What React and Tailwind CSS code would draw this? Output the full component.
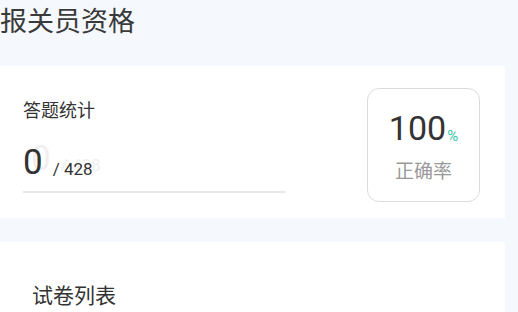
import React from "react";

export default function App() {
  const font = { fontFamily: '"Noto Sans CJK SC", Roboto, "Noto Sans", sans-serif' };
  const num = { fontFamily: "Roboto, sans-serif" };
  return (
    <div className="w-[518px] h-[312px] overflow-hidden bg-[#f5f8fd] text-[#333]" style={font}>
      <div className="h-[66px] pt-[2px]">
        <div className="text-[27px] leading-[36px] text-[#3a3a3a]">报关员资格</div>
      </div>
      <div className="w-[505px] h-[152px] bg-white flex items-center justify-between pl-[23px] pr-[25px]">
        <div className="flex flex-col w-[263px] pt-[6px]">
          <div className="text-[18px] leading-[24px] text-[#333]">答题统计</div>
          <div className="relative mt-[23px] h-[38px]">
            <div className="absolute left-[8px] top-[-4px] flex items-end text-[#f0f0f0]" aria-hidden="true">
              <span className="text-[35px] leading-[38px]" style={num}>0</span>
              <span className="ml-[10px] mb-[3px] text-[17px] leading-[20px]" style={num}>/ 428</span>
            </div>
            <div className="relative flex items-end">
              <span className="text-[35px] leading-[38px] text-[#333]" style={num}>0</span>
              <span className="ml-[10px] mb-[3px] text-[17px] leading-[20px] text-[#333]" style={num}>/ 428</span>
            </div>
          </div>
          <div className="mt-[9px] h-[2px] bg-[#e8e8e8]" />
        </div>
        <div className="mt-[5px] w-[113px] h-[114px] border border-[#dcdcdc] rounded-[12px] flex flex-col items-center justify-center">
          <div className="flex items-end">
            <span className="text-[34px] leading-[40px] text-[#333]" style={num}>100</span>
            <span className="text-[15px] leading-[20px] mb-[2px] ml-[1px] text-[#3cc4a6]" style={num}>%</span>
          </div>
          <div className="mt-[10px] text-[19px] leading-[24px] text-[#999]">正确率</div>
        </div>
      </div>
      <div className="h-[24px]" />
      <div className="w-[505px] h-[80px] bg-white pl-[32px] pt-[38px]">
        <div className="text-[21px] leading-[28px] text-[#333]">试卷列表</div>
      </div>
    </div>
  );
}
